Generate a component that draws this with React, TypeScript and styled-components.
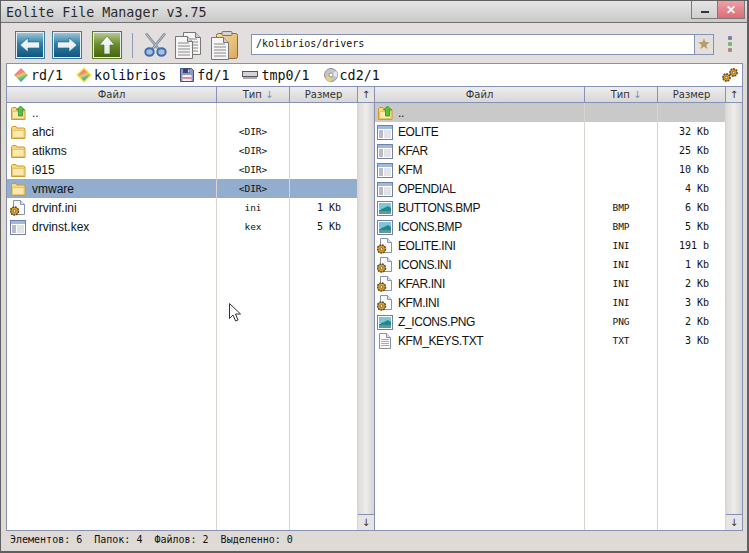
import React from 'react';
import styled, { createGlobalStyle } from 'styled-components';

const GlobalStyle = createGlobalStyle`
  html, body { margin: 0; padding: 0; width: 749px; height: 553px; overflow: hidden; background: #dfdad5; }
  * { box-sizing: border-box; }
`;

type Kind = 'up' | 'dir' | 'ini' | 'app' | 'img' | 'txt';
interface FileRow { name: string; kind: Kind; type: string; size: string; }

const leftFiles: FileRow[] = [
  { name: '..', kind: 'up', type: '', size: '' },
  { name: 'ahci', kind: 'dir', type: '<DIR>', size: '' },
  { name: 'atikms', kind: 'dir', type: '<DIR>', size: '' },
  { name: 'i915', kind: 'dir', type: '<DIR>', size: '' },
  { name: 'vmware', kind: 'dir', type: '<DIR>', size: '' },
  { name: 'drvinf.ini', kind: 'ini', type: 'ini', size: '1 Kb' },
  { name: 'drvinst.kex', kind: 'app', type: 'kex', size: '5 Kb' },
];

const rightFiles: FileRow[] = [
  { name: '..', kind: 'up', type: '', size: '' },
  { name: 'EOLITE', kind: 'app', type: '', size: '32 Kb' },
  { name: 'KFAR', kind: 'app', type: '', size: '25 Kb' },
  { name: 'KFM', kind: 'app', type: '', size: '10 Kb' },
  { name: 'OPENDIAL', kind: 'app', type: '', size: '4 Kb' },
  { name: 'BUTTONS.BMP', kind: 'img', type: 'BMP', size: '6 Kb' },
  { name: 'ICONS.BMP', kind: 'img', type: 'BMP', size: '5 Kb' },
  { name: 'EOLITE.INI', kind: 'ini', type: 'INI', size: '191 b' },
  { name: 'ICONS.INI', kind: 'ini', type: 'INI', size: '1 Kb' },
  { name: 'KFAR.INI', kind: 'ini', type: 'INI', size: '2 Kb' },
  { name: 'KFM.INI', kind: 'ini', type: 'INI', size: '3 Kb' },
  { name: 'Z_ICONS.PNG', kind: 'img', type: 'PNG', size: '2 Kb' },
  { name: 'KFM_KEYS.TXT', kind: 'txt', type: 'TXT', size: '3 Kb' },
];

const FolderIcon = ({ up }: { up?: boolean }) => (
  <svg width="16" height="16" viewBox="0 0 16 16">
    <path d="M1.5 14.5V3.5l1-1h3.5l1 1.5h7l1 1v9.5z" fill="#f6d67e" stroke="#cf9a2c" />
    <path d="M2.5 6.5h11.5v7h-11.5z" fill="#fbe9b0" stroke="#e9c766" />
    {up && <path d="M10.5 1l4 4h-2v6h-4v-6h-2z" fill="#58c23c" stroke="#2f8f2a" strokeWidth="0.8" />}
  </svg>
);

const GearBadge = ({ x, y, r = 4 }: { x: number; y: number; r?: number }) => (
  <g>
    <circle cx={x} cy={y} r={r} fill="#c98d1e" stroke="#5f4a28" strokeWidth="1.6" strokeDasharray="1.8 .9" />
    <circle cx={x} cy={y} r={r * 0.72} fill="#e2a322" />
    <circle cx={x} cy={y} r={r * 0.35} fill="#f3efe4" stroke="#5f4a28" strokeWidth="0.7" />
  </g>
);

const IniIcon = () => (
  <svg width="16" height="16" viewBox="0 0 16 16">
    <path d="M3.5 .5h7l4 4v10h-11z" fill="#fbfbfd" stroke="#8a93ac" />
    <path d="M10.5 .5v4h4" fill="#dfe3ee" stroke="#8a93ac" />
    <GearBadge x={4.5} y={11} r={4} />
  </svg>
);

const AppIcon = () => (
  <svg width="16" height="16" viewBox="0 0 16 16">
    <rect x=".5" y="1.5" width="15" height="14" fill="#fff" stroke="#75809f" />
    <rect x="1" y="2" width="14" height="3" fill="#9dbbe0" />
    <rect x="2" y="6" width="4" height="8" fill="#b9bcc4" />
    <path d="M7 7h7M7 9h7M7 11h7M7 13h7" stroke="#c6c8d0" strokeWidth="1" />
  </svg>
);

const ImageIcon = () => (
  <svg width="16" height="16" viewBox="0 0 16 16">
    <rect x=".5" y="1.5" width="15" height="14" fill="#fff" stroke="#75809f" />
    <rect x="2" y="3" width="12" height="6" fill="#7fc6d9" />
    <path d="M2 10l5-2 4-2 3 2v6H2z" fill="#1f8a8e" />
    <path d="M2 11h12v3H2z" fill="#5f9a98" />
  </svg>
);

const TextIcon = () => (
  <svg width="16" height="16" viewBox="0 0 16 16">
    <path d="M2.5 .5h7l4 4v11h-11z" fill="#fbfbfd" stroke="#8a8f9f" />
    <path d="M9.5 .5v4h4" fill="#dfe3ee" stroke="#8a8f9f" />
    <path d="M4 6.5h8M4 8.5h8M4 10.5h8M4 12.5h8" stroke="#d99a80" strokeWidth="1" />
  </svg>
);

const FileIcon = ({ kind }: { kind: Kind }) => {
  if (kind === 'up') return <FolderIcon up />;
  if (kind === 'dir') return <FolderIcon />;
  if (kind === 'ini') return <IniIcon />;
  if (kind === 'app') return <AppIcon />;
  if (kind === 'img') return <ImageIcon />;
  return <TextIcon />;
};

const DiamondIcon = ({ glow }: { glow?: boolean }) => (
  <svg width="16" height="16" viewBox="0 0 16 16">
    <defs>
      <linearGradient id="dmA" x1="0.2" y1="0" x2="0.6" y2="1">
        <stop offset="0" stopColor="#f2906a" />
        <stop offset=".35" stopColor="#ef7f88" />
        <stop offset=".55" stopColor="#e8cf5e" />
        <stop offset=".72" stopColor="#5ec47c" />
        <stop offset="1" stopColor="#3a8de6" />
      </linearGradient>
    </defs>
    {glow && <path d="M8 0l8 8-8 8-8-8z" fill="#fbe84a" />}
    <path d={glow ? 'M8 2l6 6-6 6-6-6z' : 'M8 1l7 7-7 7-7-7z'} fill="url(#dmA)" />
  </svg>
);

const FloppyIcon = () => (
  <svg width="16" height="14" viewBox="-1 0 16 14">
    <path d="M.5.5h11l2 2v11H.5z" fill="#8b9ac8" stroke="#46507a" />
    <rect x="3" y="1" width="7" height="4" fill="#3c4468" />
    <rect x="8" y="1.5" width="1.5" height="3" fill="#d8dcec" />
    <rect x="2.5" y="7" width="9" height="6" fill="#f3f3f6" />
    <rect x="2.5" y="9" width="9" height="2" fill="#e58a98" />
  </svg>
);

const ChipIcon = () => (
  <svg width="17" height="8" viewBox="0 0 17 8">
    <rect x=".5" y=".5" width="15" height="5" fill="#d4d4d8" stroke="#55585f" />
    <path d="M2 6v2M4 6v2M6 6v2M8 6v2M10 6v2M12 6v2M14 6v2" stroke="#55585f" strokeWidth="1" />
  </svg>
);

const DiscIcon = () => (
  <svg width="15" height="14" viewBox="-1 0 15 14">
    <circle cx="7" cy="7" r="6.5" fill="#c6c6c6" stroke="#8f8f8f" />
    <path d="M7 7L1.5 10A6.5 6.5 0 0 0 7 13.5z" fill="#e8d27a" />
    <path d="M7 7L12 3A6.5 6.5 0 0 1 13 9z" fill="#e4e8f0" />
    <circle cx="7" cy="7" r="2" fill="#fff" stroke="#808080" strokeWidth=".8" />
  </svg>
);

const GearsIcon = () => (
  <svg width="16" height="14" viewBox="0 0 16 14">
    <GearBadge x={4.5} y={9.5} r={3.6} />
    <GearBadge x={11.5} y={4.5} r={3.6} />
  </svg>
);

const NavIcon = ({ dir, green }: { dir: 'left' | 'right' | 'up'; green?: boolean }) => {
  const id = green ? 'navG' : 'navB' + dir;
  const arrow = dir === 'left'
    ? 'M5 14l8-7v4h11.5v6H13v4z'
    : dir === 'right'
      ? 'M25 14l-8-7v4H5.5v6H17v4z'
      : 'M15 5l7.5 9H18v9h-6v-9H7.5z';
  return (
    <svg width="30" height="28" viewBox="0 0 30 28">
      <defs>
        <linearGradient id={id} x1="0" y1="0" x2="0" y2="1">
          <stop offset="0" stopColor={green ? '#b6c98c' : '#9cc4d8'} />
          <stop offset=".45" stopColor={green ? '#6c8f2e' : '#2f7fa6'} />
          <stop offset="1" stopColor={green ? '#46650f' : '#12577f'} />
        </linearGradient>
        <linearGradient id={id + 'a'} x1="0" y1="0" x2="0" y2="1">
          <stop offset="0" stopColor="#fff" />
          <stop offset="1" stopColor="#dbe6ea" />
        </linearGradient>
      </defs>
      <rect x=".5" y=".5" width="29" height="27" fill="#e9edf2" stroke={green ? '#5c7a25' : '#3d7c9e'} />
      <rect x="2" y="2" width="26" height="24" fill={`url(#${id})`} />
      <path d={arrow} fill={`url(#${id}a)`} stroke={green ? '#4b6a14' : '#1c5f86'} strokeWidth=".6" />
    </svg>
  );
};

const ScissorsIcon = () => (
  <svg width="23" height="24" viewBox="0 0 23 24">
    <path d="M2 .5l13 16M21 .5L8 16.5" stroke="#7f8792" strokeWidth="2.6" fill="none" />
    <path d="M2 .5l13 16M21 .5L8 16.5" stroke="#c3c8d0" strokeWidth="1" fill="none" />
    <ellipse cx="5.5" cy="19" rx="4.2" ry="3.8" fill="#a7bedb" stroke="#3f6db0" strokeWidth="2" />
    <ellipse cx="17.5" cy="19" rx="4.2" ry="3.8" fill="#a7bedb" stroke="#3f6db0" strokeWidth="2" />
  </svg>
);

const Sheet = ({ x, y }: { x: number; y: number }) => (
  <g transform={`translate(${x} ${y})`}>
    <path d="M.5.5h12l5 5v17H.5z" fill="#f5f5f5" stroke="#777" />
    <path d="M12.5.5v5h5" fill="#cfcfcf" stroke="#777" />
    <path d="M3 7h11M3 10h12M3 13h12M3 16h12M3 19h12" stroke="#8a8a8a" strokeWidth="1" />
  </g>
);

const CopyIcon = () => (
  <svg width="28" height="27" viewBox="0 0 28 27">
    <Sheet x={8} y={0} />
    <Sheet x={0} y={4} />
  </svg>
);

const PasteIcon = () => (
  <svg width="27" height="29" viewBox="0 0 27 29">
    <defs>
      <linearGradient id="clipG" x1="0" y1="0" x2="1" y2="1">
        <stop offset="0" stopColor="#f6dd9e" />
        <stop offset="1" stopColor="#dba95c" />
      </linearGradient>
    </defs>
    <rect x="5.5" y="2.5" width="21" height="25" rx="2" fill="url(#clipG)" stroke="#8a6a30" />
    <rect x="11" y=".5" width="10" height="4" rx="1" fill="#d4d4d4" stroke="#777" />
    <Sheet x={0} y={6} />
  </svg>
);

const Window = styled.div`
  width: 749px;
  height: 553px;
  display: flex;
  flex-direction: column;
  background: #dfdad5;
  border: 1px solid #5f5f5f;
  border-width: 1px 2px 2px 1px;
`;

const TitleBar = styled.div`
  height: 22px;
  flex: none;
  display: flex;
  align-items: center;
  justify-content: space-between;
  padding: 1px 0 0 5px;
  background: linear-gradient(#e6e6e6, #c9c9c9);
  border-bottom: 1px solid #6f6f6f;
`;

const TitleText = styled.span`
  font: 13.33px "DejaVu Sans Mono", "Liberation Mono", monospace;
  color: #2a2a2a;
`;

const WindowButtons = styled.div`
  display: flex;
  align-self: flex-start;
  height: 18px;
  margin: -1px 2px 0 0;
`;

const WindowButton = styled.div<{ $close?: boolean }>`
  width: 27px;
  display: flex;
  align-items: center;
  justify-content: center;
  border: 1px solid #7a7a7a;
  border-top: 0;
  background: ${p => (p.$close ? 'linear-gradient(#eda0a6, #dc6c76)' : 'linear-gradient(#e4e4e4, #cfcfcf)')};
  & + & { border-left: 0; }
`;

const MinimizeMark = styled.span`
  width: 8px;
  height: 2px;
  margin-top: 5px;
  background: #333;
`;

const CloseMark = styled.span`
  font: bold 12px "Liberation Sans", sans-serif;
  color: #fff;
`;

const Toolbar = styled.div`
  height: 40px;
  flex: none;
  display: flex;
  align-items: center;
  padding: 4px 15px 0 14px;
  background: #e3dfdf;
`;

const ToolGroup = styled.div<{ $gap: number; $ml?: number }>`
  display: flex;
  align-items: center;
  gap: ${p => p.$gap}px;
  margin-left: ${p => p.$ml ?? 0}px;
`;

const ToolDivider = styled.div`
  width: 1px;
  height: 25px;
  margin-left: 10px;
  background: #8d9bb8;
`;

const PathBox = styled.div`
  width: 463px;
  height: 21px;
  margin: 0 0 2px 13px;
  display: flex;
  border: 1px solid #8592b4;
  background: #fff;
`;

const PathText = styled.div`
  flex: 1;
  padding-left: 4px;
  font: 10px/18px "DejaVu Sans Mono", monospace;
  color: #111;
`;

const StarButton = styled.div`
  width: 19px;
  display: flex;
  align-items: center;
  justify-content: center;
  border-left: 1px solid #8592b4;
  background: #e3dfdf;
  color: #b59a63;
  font: 15px "DejaVu Sans", sans-serif;
`;

const MenuDots = styled.div`
  margin: 0 0 2px auto;
  display: flex;
  flex-direction: column;
  gap: 2px;
`;

const Dot = styled.span<{ $color: string }>`
  width: 4px;
  height: 4px;
  border-radius: 1px;
  background: ${p => p.$color};
`;

const Main = styled.div`
  flex: 1;
  min-height: 0;
  margin: 0 4px 0 5px;
  display: flex;
  flex-direction: column;
  border: 1px solid #8592b4;
  background: #fff;
`;

const DriveBar = styled.div`
  height: 23px;
  flex: none;
  display: flex;
  align-items: center;
  padding: 0 4px 0 6px;
  border-bottom: 1px solid #8592b4;
`;

const Drive = styled.div<{ $gap?: number }>`
  display: flex;
  align-items: center;
  gap: 2px;
  margin-right: ${p => p.$gap ?? 13}px;
  font: 13.33px "DejaVu Sans Mono", monospace;
  color: #111;
`;

const DriveSpacer = styled.div`
  margin-left: auto;
  display: flex;
`;

const Panels = styled.div`
  flex: 1;
  min-height: 0;
  display: flex;
`;

const Panel = styled.div`
  display: flex;
  & + & { border-left: 1px solid #8592b4; }
`;

const Column = styled.div<{ $width: number }>`
  width: ${p => p.$width}px;
  display: flex;
  flex-direction: column;
  border-right: 1px solid #d9d4cd;
`;

const Header = styled.div<{ $shift?: number }>`
  height: 16px;
  flex: none;
  margin-right: -1px;
  padding-left: ${p => p.$shift ?? 0}px;
  text-align: center;
  font: 10px/15px "DejaVu Sans", sans-serif;
  color: #333;
  background: linear-gradient(#eeeeee, #d8d6d6);
  border-right: 1px solid #8592b4;
  border-bottom: 1px solid #8592b4;
`;

const SortMark = styled.span`
  color: #7d8db0;
`;

const Row = styled.div<{ $bg?: string; $align?: string }>`
  height: 19px;
  flex: none;
  display: flex;
  align-items: center;
  justify-content: ${p => p.$align ?? 'flex-start'};
  background: ${p => p.$bg ?? 'transparent'};
`;

const NameCell = styled(Row)<{ $caps?: boolean }>`
  gap: ${p => (p.$caps ? 5 : 6)}px;
  padding-left: ${p => (p.$caps ? 2 : 3)}px;
  font: 12px "Liberation Sans", sans-serif;
  letter-spacing: ${p => (p.$caps ? -0.4 : 0)}px;
  color: #111;
`;

const TypeCell = styled(Row)`
  font: 9.5px "DejaVu Sans Mono", monospace;
  color: #111;
`;

const SizeCell = styled(Row)`
  padding-right: 16px;
  font: 10px "DejaVu Sans Mono", monospace;
  color: #111;
`;

const Rows = styled.div`
  display: flex;
  flex-direction: column;
`;

const ScrollBar = styled.div`
  width: 16px;
  display: flex;
  flex-direction: column;
  background: #dedbdb;
`;

const ScrollButton = styled.div`
  height: 16px;
  flex: none;
  text-align: center;
  font: 10px/15px "DejaVu Sans", sans-serif;
  color: #333;
  background: #e7e4e4;
  border-bottom: 1px solid #8592b4;
`;

const ScrollThumb = styled.div`
  flex: 1;
  background: linear-gradient(90deg, #ddd9d9, #efecec 50%, #d7d3d3);
`;

const ScrollButtonDown = styled(ScrollButton)`
  border-bottom: 0;
  border-top: 1px solid #8592b4;
`;

const StatusBar = styled.div`
  height: 20px;
  flex: none;
  padding: 0 0 4px 9px;
  display: flex;
  align-items: center;
  gap: 12px;
  font: 10px "DejaVu Sans Mono", monospace;
  color: #111;
  background: #dfdad5;
`;

const Cursor = styled.svg`
  position: absolute;
  left: 229px;
  top: 303px;
`;

interface FilePanelProps { files: FileRow[]; activeBg: string; activeIndex: number; caps?: boolean; }

const FilePanel = ({ files, activeBg, activeIndex, caps }: FilePanelProps) => (
  <Panel>
    <Column $width={210}>
      <Header>Файл</Header>
      <Rows>
        {files.map((f, i) => (
          <NameCell key={i} $caps={caps} $bg={i === activeIndex ? activeBg : undefined}>
            <FileIcon kind={f.kind} />
            {f.name}
          </NameCell>
        ))}
      </Rows>
    </Column>
    <Column $width={73}>
      <Header $shift={10}>Тип <SortMark>↓</SortMark></Header>
      <Rows>
        {files.map((f, i) => (
          <TypeCell key={i} $align="center" $bg={i === activeIndex ? activeBg : undefined}>{f.type}</TypeCell>
        ))}
      </Rows>
    </Column>
    <Column $width={68}>
      <Header>Размер</Header>
      <Rows>
        {files.map((f, i) => (
          <SizeCell key={i} $align="flex-end" $bg={i === activeIndex ? activeBg : undefined}>{f.size}</SizeCell>
        ))}
      </Rows>
    </Column>
    <ScrollBar>
      <ScrollButton>↑</ScrollButton>
      <ScrollThumb />
      <ScrollButtonDown>↓</ScrollButtonDown>
    </ScrollBar>
  </Panel>
);

const App: React.FC = () => (
  <Window>
    <GlobalStyle />
    <TitleBar>
      <TitleText>Eolite File Manager v3.75</TitleText>
      <WindowButtons>
        <WindowButton><MinimizeMark /></WindowButton>
        <WindowButton $close><CloseMark>✕</CloseMark></WindowButton>
      </WindowButtons>
    </TitleBar>
    <Toolbar>
      <ToolGroup $gap={7}>
        <NavIcon dir="left" />
        <NavIcon dir="right" />
      </ToolGroup>
      <ToolGroup $gap={0} $ml={10}>
        <NavIcon dir="up" green />
      </ToolGroup>
      <ToolDivider />
      <ToolGroup $gap={8} $ml={11}>
        <ScissorsIcon />
        <CopyIcon />
        <PasteIcon />
      </ToolGroup>
      <PathBox>
        <PathText>/kolibrios/drivers</PathText>
        <StarButton>★</StarButton>
      </PathBox>
      <MenuDots>
        <Dot $color="#7b7fa8" />
        <Dot $color="#6fbb6f" />
        <Dot $color="#a98a80" />
      </MenuDots>
    </Toolbar>
    <Main>
      <DriveBar>
        <Drive><DiamondIcon />rd/1</Drive>
        <Drive><DiamondIcon glow />kolibrios</Drive>
        <Drive><FloppyIcon />fd/1</Drive>
        <Drive><ChipIcon />tmp0/1</Drive>
        <Drive $gap={0}><DiscIcon />cd2/1</Drive>
        <DriveSpacer><GearsIcon /></DriveSpacer>
      </DriveBar>
      <Panels>
        <FilePanel files={leftFiles} activeBg="#92adcd" activeIndex={4} />
        <FilePanel files={rightFiles} activeBg="#c9c9c9" activeIndex={0} caps />
      </Panels>
    </Main>
    <StatusBar>
      <span>Элементов: 6</span>
      <span>Папок: 4</span>
      <span>Файлов: 2</span>
      <span>Выделенно: 0</span>
    </StatusBar>
    <Cursor width="13" height="19" viewBox="0 0 13 19">
      <path d="M.5.5v15l3.5-3.5 2.5 6 2.5-1-2.5-6h5z" fill="#fff" stroke="#333" />
    </Cursor>
  </Window>
);

export default App;
